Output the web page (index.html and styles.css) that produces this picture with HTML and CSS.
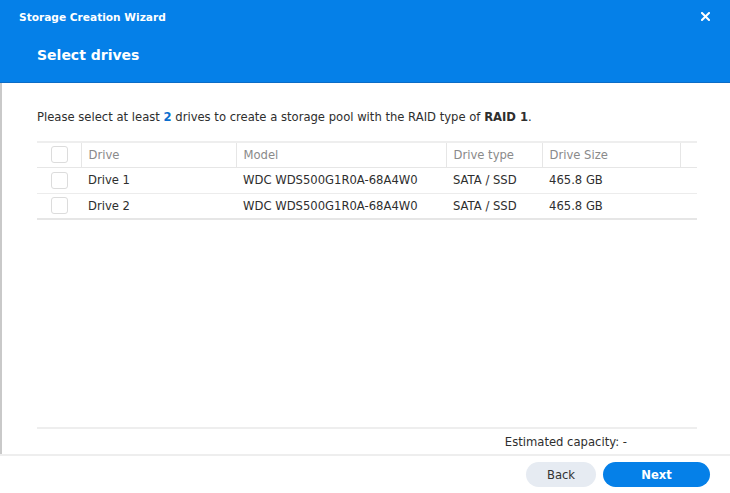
FILE: index.html
```html
<!DOCTYPE html>
<html lang="en">
<head>
<meta charset="utf-8">
<title>Storage Creation Wizard</title>
<link rel="stylesheet" href="styles.css">
</head>
<body>
<div class="dialog">
  <header class="header">
    <div class="titlebar">
      <span class="app-title">Storage Creation Wizard</span>
      <svg class="close" width="9" height="9" viewBox="0 0 9 9" aria-label="Close"><path d="M1 1 L8 8 M8 1 L1 8" stroke="#fff" stroke-width="2" stroke-linecap="square"/></svg>
    </div>
    <h1 class="step-title">Select drives</h1>
  </header>
  <main class="content">
    <p class="intro">Please select at least <b class="num">2</b> drives to create a storage pool with the RAID type of <b>RAID 1</b>.</p>
    <table class="drives">
      <thead>
        <tr>
          <th class="c-check"><span class="checkbox"></span></th>
          <th class="c-drive">Drive</th>
          <th class="c-model">Model</th>
          <th class="c-type">Drive type</th>
          <th class="c-size">Drive Size</th>
          <th class="c-rest"></th>
        </tr>
      </thead>
      <tbody>
        <tr>
          <td class="c-check"><span class="checkbox"></span></td>
          <td>Drive 1</td>
          <td>WDC WDS500G1R0A-68A4W0</td>
          <td>SATA / SSD</td>
          <td>465.8 GB</td>
          <td></td>
        </tr>
        <tr>
          <td class="c-check"><span class="checkbox"></span></td>
          <td>Drive 2</td>
          <td>WDC WDS500G1R0A-68A4W0</td>
          <td>SATA / SSD</td>
          <td>465.8 GB</td>
          <td></td>
        </tr>
      </tbody>
    </table>
    <div class="spacer"></div>
    <div class="summary">Estimated capacity: -</div>
  </main>
  <footer class="footer">
    <button class="btn btn-back">Back</button>
    <button class="btn btn-next">Next</button>
  </footer>
</div>
</body>
</html>
```

FILE: styles.css
```css
* { box-sizing: border-box; }
html, body { margin: 0; padding: 0; }
body {
  width: 730px;
  height: 493px;
  overflow: hidden;
  background: #fff;
  font-family: "DejaVu Sans", Verdana, sans-serif;
  font-size: 11.6px;
  color: #2e2e2e;
}
.dialog {
  display: flex;
  flex-direction: column;
  height: 493px;
}
.header {
  background: #0580e8;
  border-bottom: 1px solid #0b6cc6;
  height: 83px;
  flex: none;
  color: #fff;
}
.titlebar {
  height: 33px;
  display: flex;
  align-items: center;
  justify-content: space-between;
  padding: 0 20px 0 19px;
}
.app-title {
  font-weight: bold;
  font-size: 10.6px;
}
.close { display: block; }
.step-title {
  margin: 0;
  padding: 13px 0 0 37px;
  font-size: 14px;
  font-weight: bold;
  line-height: 18px;
}
.content {
  flex: 1;
  display: flex;
  flex-direction: column;
  border-left: 2px solid #c9c9c9;
  padding: 0 33px 0 35px;
}
.intro {
  margin: 27px 0 0 0;
  line-height: 15px;
}
.intro b { font-weight: bold; }
.intro .num { color: #0b6fcf; }
.drives {
  margin-top: 16px;
  width: 660px;
  border-collapse: collapse;
  table-layout: fixed;
}
.drives th, .drives td {
  text-align: left;
  padding: 0 7px;
  white-space: nowrap;
  font-weight: normal;
}
.drives thead tr { border-top: 2px solid #eeeeee; border-bottom: 1px solid #e6e6e6; }
.drives th {
  height: 25px;
  color: #8a8a8a;
  border-left: 1px solid #e6e6e6;
}
.drives th:first-child { border-left: none; }
.drives td { height: 26px; color: #2e2e2e; }
.drives tbody tr { border-bottom: 1px solid #ececec; }
.drives tbody tr:last-child { border-bottom: 2px solid #e6e6e6; }
.c-check { width: 44px; padding: 0 !important; }
.c-drive { width: 155px; }
.c-model { width: 210px; }
.c-type { width: 96px; }
.c-size { width: 138px; }
.c-rest { width: 17px; }
.checkbox {
  display: block;
  width: 17px;
  height: 17px;
  margin-left: 14px;
  border: 1px solid #dcdcdc;
  border-radius: 3px;
  background: #fff;
}
.spacer { flex: 1; }
.summary {
  border-top: 2px solid #eeeeee;
  height: 27px;
  display: flex;
  align-items: center;
  justify-content: flex-end;
  padding-right: 70px;
  color: #2e2e2e;
}
.footer {
  flex: none;
  height: 39px;
  border-top: 2px solid #eeeeee;
  display: flex;
  justify-content: flex-end;
  align-items: flex-start;
  gap: 7px;
  padding: 6px 20px 0 0;
}
.btn {
  font-family: "DejaVu Sans", Verdana, sans-serif;
  font-size: 11.6px;
  height: 25px;
  border: none;
  border-radius: 13px;
  cursor: pointer;
  padding: 0;
}
.btn-back {
  width: 70px;
  background: #e6ebf2;
  color: #333;
}
.btn-next {
  width: 107px;
  background: #0580e8;
  color: #fff;
  font-weight: bold;
}
```
